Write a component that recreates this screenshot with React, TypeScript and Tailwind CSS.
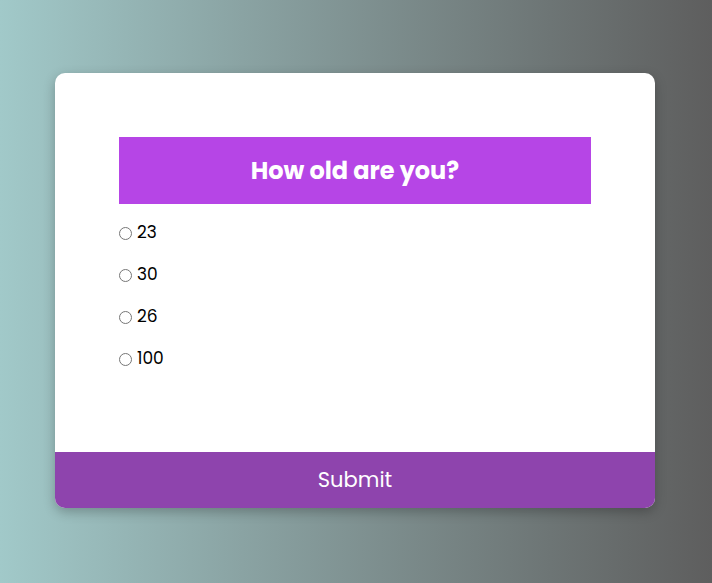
import React from 'react';

const AGES = ['23', '30', '26', '100'];

export default function App() {
  return (
    <div
      className="min-h-screen w-full flex items-start justify-center bg-gradient-to-r from-[#a1c9c9] to-[#5e5e5e] pt-[73px] pr-[2px]"
      style={{ fontFamily: 'Poppins, Inter, "Noto Sans", sans-serif' }}
    >
      <div className="w-[600px] h-[435px] bg-white rounded-[10px] shadow-[0_4px_12px_rgba(0,0,0,0.25)] overflow-hidden flex flex-col">
        <div className="flex-1 px-16 pt-16">
          <div className="h-[67px] bg-[#b645e6] flex items-center justify-center">
            <h2 className="text-white text-[24px] font-bold">How old are you?</h2>
          </div>
          <ul className="pt-[18px] space-y-[20px]">
            {AGES.map((a) => (
              <li key={a} className="flex items-center h-[22px]">
                <input type="radio" name="age" className="w-[13px] h-[13px] m-0 mr-[5px]" />
                <label className="text-[17px] text-black">{a}</label>
              </li>
            ))}
          </ul>
        </div>
        <button className="h-[56px] w-full bg-[#8e44ad] text-white text-[21px]">Submit</button>
      </div>
    </div>
  );
}
